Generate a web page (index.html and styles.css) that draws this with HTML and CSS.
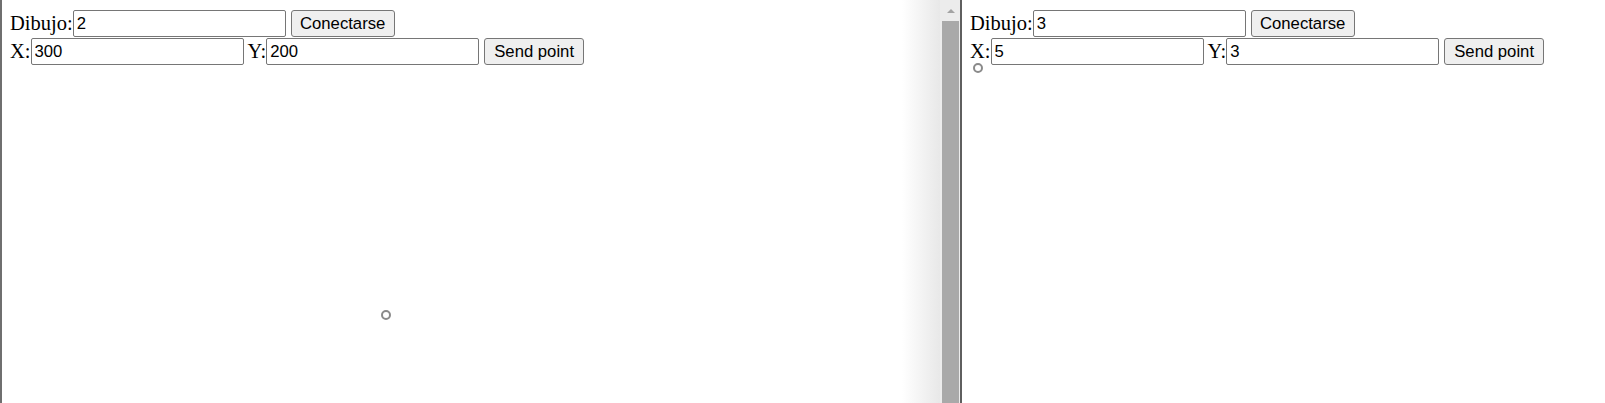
FILE: index.html
```html
<!DOCTYPE html>
<html lang="es">
<head>
<meta charset="utf-8">
<title>Dibujo</title>
<link rel="stylesheet" href="styles.css">
</head>
<body>
  <div class="pane pane-left">
    <div class="form">
      <div class="row">
        <span class="label">Dibujo:</span><input class="field" type="text" value="2"><button class="btn btn-connect">Conectarse</button>
      </div>
      <div class="row">
        <span class="label">X:</span><input class="field" type="text" value="300"><span class="label label-y">Y:</span><input class="field" type="text" value="200"><button class="btn btn-send">Send point</button>
      </div>
    </div>
    <div class="canvas">
      <span class="dot" style="left:371px;top:245px"></span>
    </div>
    <div class="shadow"></div>
  </div>
  <div class="scrollbar">
    <div class="scroll-up"><span class="arrow"></span></div>
    <div class="thumb"></div>
  </div>
  <div class="divider"></div>
  <div class="pane pane-right">
    <div class="form">
      <div class="row">
        <span class="label">Dibujo:</span><input class="field" type="text" value="3"><button class="btn btn-connect">Conectarse</button>
      </div>
      <div class="row">
        <span class="label">X:</span><input class="field" type="text" value="5"><span class="label label-y">Y:</span><input class="field" type="text" value="3"><button class="btn btn-send">Send point</button>
      </div>
    </div>
    <div class="canvas">
      <span class="dot" style="left:3px;top:-2px"></span>
    </div>
  </div>
</body>
</html>
```

FILE: styles.css
```css
html, body {
  margin: 0;
  padding: 0;
  background: #ffffff;
}

body {
  display: flex;
  width: 1605px;
  height: 403px;
  overflow: hidden;
  font-family: "Liberation Serif", "Times New Roman", serif;
  font-size: 20.5px;
  color: #000;
}

.pane {
  position: relative;
  display: flex;
  flex-direction: column;
  background: #fff;
}

.pane-left {
  width: 938px;
  border-left: 2px solid #6f6f6f;
}

.pane-right {
  flex: 1;
}

.form {
  padding: 10px 0 0 8px;
  display: flex;
  flex-direction: column;
  gap: 1px;
}

.row {
  display: flex;
  align-items: center;
  height: 27px;
  white-space: nowrap;
}

.label {
  line-height: 27px;
}

.label-y {
  margin-left: 4px;
}

.field {
  box-sizing: border-box;
  width: 213px;
  height: 27px;
  margin: 0;
  padding: 1px 3px;
  border: 1px solid #767676;
  border-radius: 2px;
  font-family: "Liberation Sans", Arial, sans-serif;
  font-size: 16.7px;
  color: #000;
  background: #fff;
  outline: none;
}

.btn {
  box-sizing: border-box;
  height: 27px;
  margin: 0 0 0 5px;
  padding: 0 8px;
  border: 1px solid #767676;
  border-radius: 3px;
  background: #efefef;
  font-family: "Liberation Sans", Arial, sans-serif;
  font-size: 16.7px;
  color: #000;
}

.btn-connect {
  width: 104px;
}

.btn-send {
  width: 100px;
}

.canvas {
  position: relative;
  flex: 1;
  margin-left: 8px;
}

.dot {
  position: absolute;
  box-sizing: border-box;
  width: 10px;
  height: 10px;
  border: 2.5px solid #8a8a8a;
  border-radius: 50%;
}

.shadow {
  position: absolute;
  top: 0;
  right: 0;
  bottom: 0;
  width: 38px;
  background: linear-gradient(to right, rgba(235, 235, 235, 0), rgba(232, 232, 232, 1));
  pointer-events: none;
}

.scrollbar {
  width: 20px;
  display: flex;
  flex-direction: column;
  background: #ececec;
  padding: 0 1px 0 2px;
  box-sizing: border-box;
}

.scroll-up {
  height: 21px;
  display: flex;
  align-items: center;
  justify-content: center;
}

.arrow {
  width: 0;
  height: 0;
  border-left: 4px solid transparent;
  border-right: 4px solid transparent;
  border-bottom: 4px solid #a3a3a3;
}

.thumb {
  flex: 1;
  background: #a9a9a9;
}

.divider {
  width: 2px;
  background: #5f5f5f;
}
```
